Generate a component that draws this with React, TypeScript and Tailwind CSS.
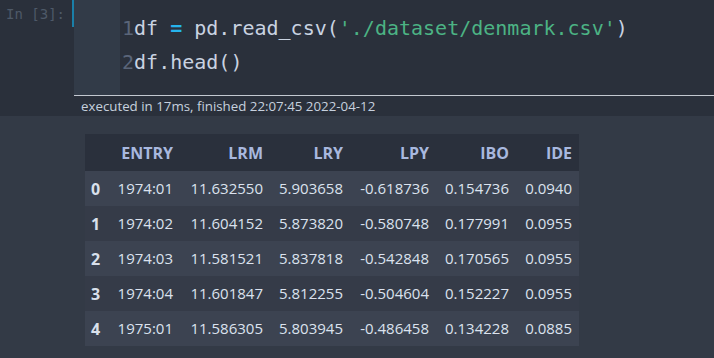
const columns = [
  { key: 'ENTRY', w: 'w-[73px]' },
  { key: 'LRM', w: 'w-[90px]' },
  { key: 'LRY', w: 'w-[80px]' },
  { key: 'LPY', w: 'w-[86px]' },
  { key: 'IBO', w: 'w-[80px]' },
  { key: 'IDE', w: 'w-[63px]' },
];

const rows = [
  ['1974:01', '11.632550', '5.903658', '-0.618736', '0.154736', '0.0940'],
  ['1974:02', '11.604152', '5.873820', '-0.580748', '0.177991', '0.0955'],
  ['1974:03', '11.581521', '5.837818', '-0.542848', '0.170565', '0.0955'],
  ['1974:04', '11.601847', '5.812255', '-0.504604', '0.152227', '0.0955'],
  ['1975:01', '11.586305', '5.803945', '-0.486458', '0.134228', '0.0885'],
];

function CodeCell() {
  return (
    <div className="flex h-[95px] bg-[#2a303b]">
      <div className="w-[72px] shrink-0 pr-[7px] pt-[4px] text-right text-[14px] leading-[20px] text-[#4e5968] font-['DejaVu_Sans_Mono',monospace]">
        In [3]:
      </div>
      <div className="h-[27px] w-[2px] shrink-0 bg-[#1a7fa8]" />
      <div className="w-[46px] shrink-0 bg-[#323b48]" />
      <div className="flex flex-col pl-[2px] pt-[11px] text-[20px] leading-[34px] text-[#c9d3e1] font-['DejaVu_Sans_Mono',monospace]">
        <div className="whitespace-pre">
          <span className="text-[#5a6579]">1</span>df <span className="font-bold text-[#26b4ec]">=</span> pd.read_csv(
          <span className="text-[#4cb384]">'./dataset/denmark.csv'</span>)
        </div>
        <div className="whitespace-pre">
          <span className="text-[#5a6579]">2</span>df.head()
        </div>
      </div>
    </div>
  );
}

function ExecLine() {
  return (
    <div className="flex h-[21px] bg-[#2a303b]">
      <div className="w-[74px] shrink-0" />
      <div className="flex-1 border-t border-[#c3c8d0] pl-[7px] pt-[1px] text-[13.3px] leading-[19px] text-[#c6d0de] font-['Open_Sans',sans-serif]">
        executed in 17ms, finished 22:07:45 2022-04-12
      </div>
    </div>
  );
}

function DataTable() {
  return (
    <table className="border-collapse text-[15px] font-['Open_Sans',sans-serif]">
      <thead>
        <tr className="h-[37px] bg-[#2a303c]">
          <th className="w-[22px]" />
          {columns.map((c) => (
            <th key={c.key} className={`${c.w} pr-[7px] text-right text-[16px] font-bold text-[#a8b8df]`}>
              {c.key}
            </th>
          ))}
        </tr>
      </thead>
      <tbody>
        {rows.map((r, i) => (
          <tr key={i} className={i % 2 === 0 ? 'h-[35px] bg-[#3c4351]' : 'h-[35px] bg-[#353b48]'}>
            <th className="pl-[6px] text-left text-[16px] font-bold text-[#d9e0eb]">{i}</th>
            {r.map((v, j) => (
              <td key={j} className="pr-[7px] text-right text-[#dbe2ee]">
                {v}
              </td>
            ))}
          </tr>
        ))}
      </tbody>
    </table>
  );
}

export default function App() {
  return (
    <div className="h-[358px] w-[714px] overflow-hidden bg-[#333a46]">
      <CodeCell />
      <ExecLine />
      <div className="pl-[85px] pt-[18px]">
        <DataTable />
      </div>
    </div>
  );
}
